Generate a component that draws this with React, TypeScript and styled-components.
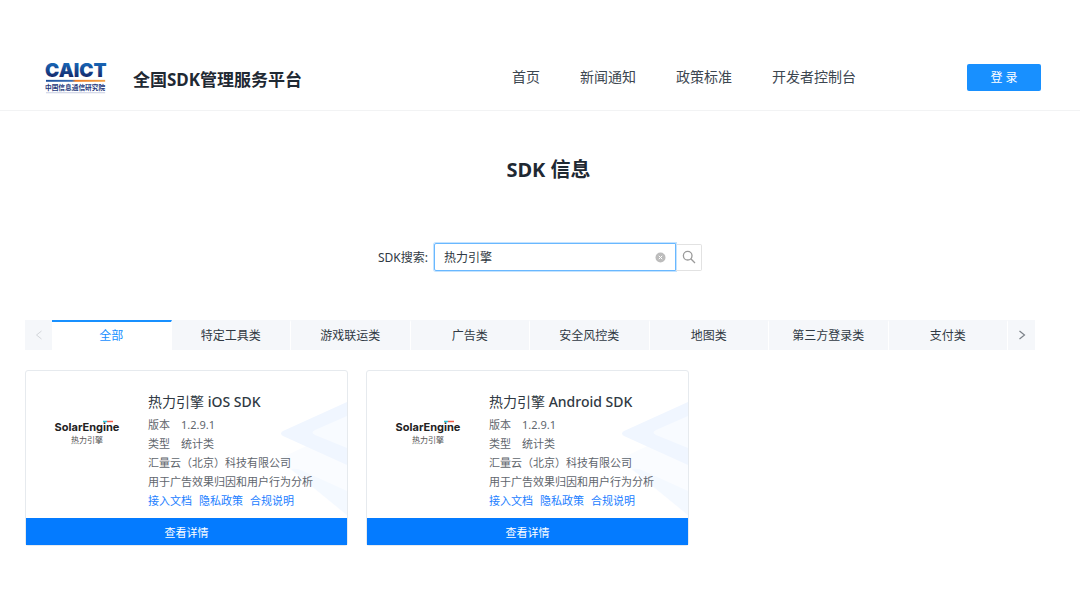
import React, { useState } from "react";
import styled, { createGlobalStyle } from "styled-components";

const GlobalStyle = createGlobalStyle`
  * { box-sizing: border-box; }
  body {
    margin: 0;
    background: #fff;
    color: #303943;
    font-family: "Noto Sans", "Noto Sans CJK SC", sans-serif;
    font-size: 12px;
  }
  button, input { font-family: inherit; font-size: inherit; }
  a { text-decoration: none; }
  h1, h2, h3, p { margin: 0; }
`;

const Header = styled.header`
  display: flex;
  align-items: center;
  padding: 44px 39px 0 45px;
  height: 111px;
  border-bottom: 1px solid #f2f3f4;
`;

const Brand = styled.a`
  display: flex;
  align-items: center;
  gap: 24px;
  flex: 1;
  color: #1f2933;
`;

const SiteName = styled.span`
  padding-top: 5px;
  font-size: 17px;
  font-weight: 700;
  line-height: 24px;
`;

const Nav = styled.nav`
  display: flex;
  gap: 40px;
  font-size: 14px;
  line-height: 20px;
`;

const NavLink = styled.a`
  color: #3c4650;
`;

const HeaderSide = styled.div`
  flex: 1;
  max-width: 185px;
  display: flex;
  justify-content: flex-end;
`;

const LoginButton = styled.button`
  width: 74px;
  height: 27px;
  border: 0;
  border-radius: 2px;
  background: #1890ff;
  color: #fff;
  padding: 0;
`;

const PageTitle = styled.h1`
  margin-top: 45px;
  padding-left: 17px;
  text-align: center;
  font-size: 20px;
  line-height: 28px;
  font-weight: 700;
  color: #1f2933;
`;

const SearchForm = styled.form`
  display: flex;
  justify-content: center;
  align-items: center;
  margin-top: 59px;
`;

const SearchLabel = styled.label`
  margin-right: 6px;
`;

const SearchField = styled.div`
  display: flex;
  align-items: center;
  width: 242px;
  height: 28px;
  padding: 0 9px;
  border: 1px solid #69b8ff;
  border-radius: 2px 0 0 2px;
  box-shadow: 0 0 0 1px #c4e3ff;
`;

const SearchInput = styled.input`
  flex: 1;
  min-width: 0;
  border: 0;
  padding: 0;
  outline: 0;
  background: none;
  color: #303943;
`;

const IconButton = styled.button`
  display: flex;
  align-items: center;
  justify-content: center;
  border: 0;
  padding: 0;
  background: none;
`;

const SearchButton = styled(IconButton)`
  width: 26px;
  height: 27px;
  border: 1px solid #e2e2e2;
  border-left: 0;
  border-radius: 0 2px 2px 0;
`;

const Content = styled.main`
  padding: 0 45px 52px 25px;
`;

const TabBar = styled.div`
  display: flex;
  height: 30px;
  margin-top: 49px;
  background: #f5f7fa;
`;

const TabArrow = styled(IconButton)`
  width: 27px;
  color: #7b8188;
  &:disabled { color: #d3d6da; }
`;

const Tab = styled.button<{ $active: boolean }>`
  flex: 1;
  padding: 0;
  border: 0;
  border-top: 2px solid ${(p) => (p.$active ? "#1890ff" : "transparent")};
  border-right: 1px solid #fff;
  background: ${(p) => (p.$active ? "#fff" : "transparent")};
  color: ${(p) => (p.$active ? "#1890ff" : "#303943")};
  line-height: 26px;
`;

const CardGrid = styled.div`
  display: grid;
  grid-template-columns: repeat(3, 1fr);
  gap: 18px;
  margin-top: 20px;
  padding-right: 5px;
`;

const Card = styled.article`
  position: relative;
  border: 1px solid #e6eaee;
  border-radius: 3px;
`;

const Watermark = styled.svg`
  position: absolute;
  right: 0;
  top: 20px;
  z-index: -1;
`;

const CardBody = styled.div`
  display: flex;
  height: 147px;
  padding-top: 21px;
`;

const CardLogo = styled.div`
  width: 122px;
  padding-top: 25px;
  text-align: center;
`;

const Details = styled.div`
  font-size: 11px;
  line-height: 19px;
  color: #5f666d;
`;

const CardTitle = styled.h3`
  margin-bottom: 3px;
  font-size: 14px;
  line-height: 20px;
  font-weight: 500;
  color: #303943;
`;

const ProductName = styled.span`
  font-weight: 400;
`;

const Fact = styled.p`
  display: flex;
  gap: 11px;
`;

const Links = styled.p`
  display: flex;
  gap: 7px;
`;

const DocLink = styled.a`
  color: #1a7dff;
`;

const DetailButton = styled.button`
  display: block;
  width: 100%;
  height: 27px;
  border: 0;
  padding: 0;
  background: #047bff;
  color: #fff;
  font-size: 11px;
`;

function CaictLogo() {
  return (
    <svg width="64" height="42" viewBox="0 0 67 44" role="img" aria-label="CAICT 中国信息通信研究院">
      <defs>
        <linearGradient id="caict" x1="0" y1="0" x2="0" y2="1">
          <stop offset="0.200" stopColor="#1764b4" />
          <stop offset="0.800" stopColor="#15286a" />
        </linearGradient>
        <linearGradient id="rule" x1="0" y1="0" x2="1" y2="0">
          <stop offset="0" stopColor="#1d4f9c" />
          <stop offset="0.440" stopColor="#3a6db4" />
          <stop offset="0.500" stopColor="#ee7b22" />
          <stop offset="1" stopColor="#f5a54a" />
        </linearGradient>
      </defs>
      <text x="0" y="22" fontFamily="Inter, sans-serif" fontSize="20" fontWeight="900" fill="url(#caict)">CAICT</text>
      <rect x="1" y="25" width="62" height="2" fill="url(#rule)" />
      <text x="0" y="36" fontSize="7" fontWeight="700" fill="#26397c">中国信息通信研究院</text>
      <path d="M1 38.500H63" stroke="#c4cbe0" strokeWidth="1" />
    </svg>
  );
}

function SolarEngineLogo() {
  return (
    <svg width="70" height="30" viewBox="0 0 70 30" role="img" aria-label="SolarEngine 热力引擎">
      <text x="35" y="14" textAnchor="middle" fontFamily="Inter, sans-serif" fontSize="11" fontWeight="700" fill="#222">SolarEngine</text>
      <path d="M51 4.500H55" stroke="#28c3d4" strokeWidth="1.500" />
      <path d="M55 4.500H61" stroke="#f05a4a" strokeWidth="1.500" />
      <text x="35" y="26" textAnchor="middle" fontSize="8" fill="#555">热力引擎</text>
    </svg>
  );
}

const tabs = ["全部", "特定工具类", "游戏联运类", "广告类", "安全风控类", "地图类", "第三方登录类", "支付类"];
const platforms = ["iOS SDK", "Android SDK"];

export default function App() {
  const [query, setQuery] = useState("热力引擎");
  const [active, setActive] = useState(0);
  return (
    <>
      <GlobalStyle />
      <Header>
        <Brand href="#">
          <CaictLogo />
          <SiteName>全国SDK管理服务平台</SiteName>
        </Brand>
        <Nav>
          {["首页", "新闻通知", "政策标准", "开发者控制台"].map((n) => (
            <NavLink href="#" key={n}>{n}</NavLink>
          ))}
        </Nav>
        <HeaderSide>
          <LoginButton type="button">登 录</LoginButton>
        </HeaderSide>
      </Header>
      <PageTitle>SDK 信息</PageTitle>
      <SearchForm onSubmit={(e) => e.preventDefault()}>
        <SearchLabel htmlFor="sdk-search">SDK搜索:</SearchLabel>
        <SearchField>
          <SearchInput id="sdk-search" value={query} onChange={(e) => setQuery(e.target.value)} />
          <IconButton type="button" aria-label="清除" onClick={() => setQuery("")}>
            <svg width="11" height="11" viewBox="0 0 11 11">
              <circle cx="5.500" cy="5.500" r="5" fill="#bcbcbc" />
              <path d="M3.800 3.800L7.200 7.200M7.200 3.800L3.800 7.200" stroke="#fff" />
            </svg>
          </IconButton>
        </SearchField>
        <SearchButton type="submit" aria-label="搜索">
          <svg width="14" height="14" viewBox="0 0 14 14" fill="none" stroke="#9a9a9a" strokeWidth="1.300">
            <circle cx="5.700" cy="5.700" r="4.300" />
            <path d="M8.800 8.800L13 13" />
          </svg>
        </SearchButton>
      </SearchForm>
      <Content>
        <TabBar>
          <TabArrow type="button" aria-label="向左" disabled>
            <svg width="8" height="10" viewBox="0 0 8 10" fill="none" stroke="currentColor"><path d="M6.500 1L1.500 5L6.500 9" /></svg>
          </TabArrow>
          {tabs.map((t, i) => (
            <Tab type="button" key={t} $active={i === active} onClick={() => setActive(i)}>{t}</Tab>
          ))}
          <TabArrow type="button" aria-label="向右">
            <svg width="8" height="10" viewBox="0 0 8 10" fill="none" stroke="currentColor" strokeWidth="1.200"><path d="M1.500 1L6.500 5L1.500 9" /></svg>
          </TabArrow>
        </TabBar>
        <CardGrid>
          {platforms.map((platform) => (
            <Card key={platform}>
              <Watermark width="68" height="125" viewBox="0 0 68 125" aria-hidden="true">
                <path d="M38 50L4 66Q0 69 4 72L68 124V74z" fill="#fafcff" />
                <path d="M12 78L68 124V100L24 80Q18 77 12 78z" fill="#f4f9ff" />
                <path d="M68 11L4 40Q0 42.500 4 45L68 74z" fill="#f0f6ff" />
                <path d="M68 25L36 39Q31 41.500 36 44L68 57z" fill="#f8fbff" />
              </Watermark>
              <CardBody>
                <CardLogo><SolarEngineLogo /></CardLogo>
                <Details>
                  <CardTitle><ProductName>热力引擎</ProductName> {platform}</CardTitle>
                  <Fact><span>版本</span><span>1.2.9.1</span></Fact>
                  <Fact><span>类型</span><span>统计类</span></Fact>
                  <p>汇量云（北京）科技有限公司</p>
                  <p>用于广告效果归因和用户行为分析</p>
                  <Links>
                    {["接入文档", "隐私政策", "合规说明"].map((l) => (
                      <DocLink href="#" key={l}>{l}</DocLink>
                    ))}
                  </Links>
                </Details>
              </CardBody>
              <DetailButton type="button">查看详情</DetailButton>
            </Card>
          ))}
        </CardGrid>
      </Content>
    </>
  );
}
